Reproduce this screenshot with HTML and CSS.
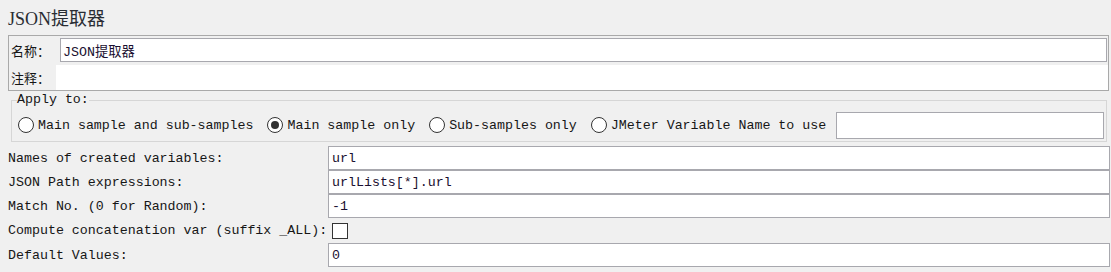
FILE: index.html
```html
<!DOCTYPE html>
<html lang="zh-CN">
<head>
    <meta charset="UTF-8">
    <meta name="viewport" content="width=device-width, initial-scale=1.0">
    <title>JSON提取器</title>
    <link rel="stylesheet" href="styles.css">
</head>
<body>

    <h1 class="title">JSON提取器</h1>

    <!-- 名称 / 注释 -->
    <div class="name-panel">
        <div class="name-row">
            <label class="cn-label" for="name">名称：</label>
            <input class="field name-field" type="text" id="name" value="JSON提取器">
        </div>
        <div class="comment-row">
            <label class="cn-label" for="comment">注释：</label>
            <input class="comment-field" type="text" id="comment">
        </div>
    </div>

    <fieldset class="apply">
        <legend>Apply to:</legend>
        <div class="apply-row">
            <label class="radio"><span class="circle"></span>Main sample and sub-samples</label>
            <label class="radio"><span class="circle checked"></span>Main sample only</label>
            <label class="radio"><span class="circle"></span>Sub-samples only</label>
            <label class="radio"><span class="circle"></span>JMeter Variable Name to use</label>
            <input class="field var-field" type="text">
        </div>
    </fieldset>

    <div class="form-grid">
        <label class="row-label">Names of created variables:</label>
        <input class="field" type="text" value="url">

        <label class="row-label">JSON Path expressions:</label>
        <input class="field" type="text" value="urlLists[*].url">

        <label class="row-label">Match No. (0 for Random):</label>
        <input class="field" type="text" value="-1">

        <label class="row-label">Compute concatenation var (suffix _ALL):</label>
        <div class="check-cell"><span class="checkbox"></span></div>

        <label class="row-label">Default Values:</label>
        <input class="field" type="text" value="0">
    </div>

</body>
</html>
```

FILE: styles.css
```css
body {
    margin: 0;
    padding: 0 1px 0 8px;
    background-color: #f0f0f0;
    color: #161616;
    font-family: "Liberation Mono", "Noto Sans CJK SC", monospace;
    font-size: 13.3px;
}
.title {
    margin: 0;
    padding: 7px 0 4px;
    height: 24px;
    line-height: 24px;
    font-family: "Liberation Serif", "Noto Sans CJK SC", serif;
    font-size: 18px;
    font-weight: normal;
    color: #2a2d33;
}
.field {
    box-sizing: border-box;
    height: 24px;
    margin: 0;
    padding: 0 3px;
    border: 1px solid #a8a8ae;
    background: #fff;
    font-family: inherit;
    font-size: inherit;
    color: #1a1030;
    outline: none;
}
.name-panel {
    margin-right: 1px;
    border: 1px solid #a9a9a9;
    height: 54px;
}
.cn-label {
    width: 45px;
    padding-left: 2px;
    font-family: "Noto Sans CJK SC", sans-serif;
    font-size: 13px;
    flex-shrink: 0;
}
.name-row {
    display: flex;
    align-items: center;
    padding-top: 2px;
    height: 24px;
}
.name-row .cn-label {
    width: 49px;
}
.name-field {
    flex: 1;
    margin-right: 1px;
    padding-left: 2px;
}
.comment-row {
    display: flex;
    align-items: center;
    margin-top: 3px;
    height: 25px;
}
.comment-field {
    flex: 1;
    box-sizing: border-box;
    height: 25px;
    margin: 0;
    border: none;
    background: #fff;
    outline: none;
}
.apply {
    margin: 1px 3px 0 3px;
    padding: 0 2px 2px 5px;
    border: 1px solid #d6d6d6;
}
.apply legend {
    padding: 0;
    line-height: 16px;
}
.apply-row {
    display: flex;
    align-items: center;
    margin-top: 3px;
    height: 28px;
}
.radio {
    display: flex;
    align-items: center;
    margin-right: 14px;
    white-space: nowrap;
}
.radio:first-child {
    margin-left: 1px;
}
.circle {
    box-sizing: border-box;
    width: 16px;
    height: 16px;
    margin-right: 4px;
    border: 1px solid #333;
    border-radius: 50%;
    background: #fff;
    display: flex;
    align-items: center;
    justify-content: center;
}
.circle.checked::after {
    content: "";
    width: 8px;
    height: 8px;
    border-radius: 50%;
    background: #333;
}
.var-field {
    flex: 1;
    height: 27px;
    margin-left: -4px;
}
.form-grid {
    display: grid;
    grid-template-columns: 320px 1fr;
    grid-template-rows: 24px 24px 24px 25px 24px;
    margin-top: 4px;
}
.row-label {
    display: flex;
    align-items: center;
    white-space: nowrap;
}
.check-cell {
    display: flex;
    align-items: center;
    padding-left: 4px;
}
.checkbox {
    box-sizing: border-box;
    width: 16px;
    height: 16px;
    border: 1px solid #333;
    background: #fff;
}
```
